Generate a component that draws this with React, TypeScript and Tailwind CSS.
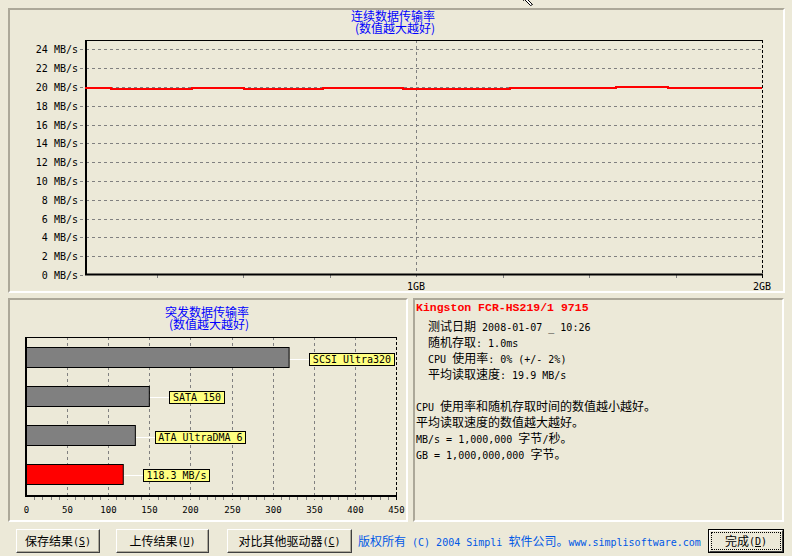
import React from "react";

const MONO = "'DejaVu Sans Mono', 'Noto Sans CJK SC', monospace";
const CJK = "'Noto Sans CJK SC', sans-serif";

// ASCII in a 6px mono cell, CJK at 12px, like the old bitmap font
function Mix({ text }: { text: string }) {
    const parts = text.split(/([\x20-\x7e]+)/).filter(Boolean);
    return (
        <>
            {parts.map((p, i) =>
                /^[\x20-\x7e]+$/.test(p) ? (
                    <span key={i} className="font-['DejaVu_Sans_Mono',monospace] text-[10px]">{p}</span>
                ) : (
                    <span key={i} className="font-['Noto_Sans_CJK_SC',sans-serif] text-[12px]">{p}</span>
                )
            )}
        </>
    );
}

function SpeedChart() {
    const gy = (i: number) => Math.round(275 - i * 18.8) + 0.5;
    const ticks = [157, 243, 330, 503, 589, 676];
    const red =
        "85,88 111,88 111,89 192,89 192,88 244,88 244,89 323,89 323,88 403,88 403,89 510,89 510,88 616,88 616,87 668,87 668,88 762,88";
    return (
        <svg width={773} height={281} viewBox="10 10 773 281" className="block">
            <text x={393} y={21} textAnchor="middle" fontFamily={CJK} fontSize={12} fill="#0000FF">
                连续数据传输率
            </text>
            <text x={395} y={33} textAnchor="middle" fontFamily={CJK} fontSize={12} fill="#0000FF">
                (数值越大越好)
            </text>
            {Array.from({ length: 13 }, (_, i) => i).map((i) => (
                <g key={i}>
                    <line x1={80} x2={i > 0 ? 762 : 85} y1={gy(i)} y2={gy(i)} stroke="#808080" strokeDasharray="3 3" />
                    <text x={78} y={gy(i) + 3.5} textAnchor="end" fontFamily={MONO} fontSize={10} fill="#000">
                        {i * 2} MB/s
                    </text>
                </g>
            ))}
            <line x1={416.5} x2={416.5} y1={40} y2={279} stroke="#808080" strokeDasharray="3 3" />
            {ticks.map((x) => (
                <line key={x} x1={x + 0.5} x2={x + 0.5} y1={275} y2={278} stroke="#808080" />
            ))}
            <line x1={85} x2={762} y1={40.5} y2={40.5} stroke="#000" />
            <line x1={762.5} x2={762.5} y1={40} y2={279} stroke="#000" strokeDasharray="3 2" />
            <line x1={86} x2={86} y1={40} y2={275} stroke="#000" strokeWidth={2} />
            <line x1={85} x2={763} y1={274.5} y2={274.5} stroke="#000" strokeWidth={2} />
            <polyline points={red} fill="none" stroke="#FF0000" strokeWidth={2} />
            <text x={416} y={289.5} textAnchor="middle" fontFamily={MONO} fontSize={10} fill="#000">1GB</text>
            <text x={762} y={289.5} textAnchor="middle" fontFamily={MONO} fontSize={10} fill="#000">2GB</text>
        </svg>
    );
}

const bars = [
    { v: 320, y: 347.5, fill: "#808080", label: "SCSI Ultra320", bx: 309.5, by: 353.5, bw: 85 },
    { v: 150, y: 386.5, fill: "#808080", label: "SATA 150", bx: 169.5, by: 391.5, bw: 55 },
    { v: 133, y: 425.5, fill: "#808080", label: "ATA UltraDMA 6", bx: 155.5, by: 431.5, bw: 90 },
    { v: 118.3, y: 464.5, fill: "#FF0000", label: "118.3 MB/s", bx: 143.5, by: 469.5, bw: 66 },
];

function BurstChart() {
    const sx = (v: number) => Math.floor(26.5 + v * 0.8222) + 0.5;
    const grid = [50, 100, 150, 200, 250, 300, 350, 400];
    const minor = Array.from({ length: 46 }, (_, i) => i * 10).filter((v) => v % 50 !== 0);
    return (
        <svg width={396} height={220} viewBox="10 300 396 220" className="block">
            <text x={207} y={317} textAnchor="middle" fontFamily={CJK} fontSize={12} fill="#0000FF">
                突发数据传输率
            </text>
            <text x={209} y={328.5} textAnchor="middle" fontFamily={CJK} fontSize={12} fill="#0000FF">
                (数值越大越好)
            </text>
            {grid.map((v) => (
                <line key={v} x1={sx(v)} x2={sx(v)} y1={337} y2={500} stroke="#808080" strokeDasharray="3 3" />
            ))}
            {minor.map((v) => (
                <line key={v} x1={sx(v)} x2={sx(v)} y1={497} y2={500} stroke="#808080" />
            ))}
            <line x1={26} x2={396} y1={337.5} y2={337.5} stroke="#000" />
            <line x1={396.5} x2={396.5} y1={337} y2={500} stroke="#000" strokeDasharray="3 2" />
            {bars.map((b) => {
                const x2 = 26 + b.v * 0.8222;
                const cy = b.by + 6;
                return (
                    <g key={b.label}>
                        <line x1={x2} x2={b.bx} y1={cy} y2={cy} stroke="#FFFFFF" />
                        <rect x={26.5} y={b.y} width={x2 - 26.5} height={20} fill={b.fill} stroke="#000" />
                        <rect x={b.bx} y={b.by} width={b.bw} height={12} fill="#FFFF80" stroke="#000" />
                        <text x={b.bx + b.bw / 2} y={cy + 3.5} textAnchor="middle" fontFamily={MONO} fontSize={10} fill="#000">
                            {b.label}
                        </text>
                    </g>
                );
            })}
            <line x1={26} x2={26} y1={337} y2={497} stroke="#000" strokeWidth={2} />
            <line x1={25} x2={397} y1={496} y2={496} stroke="#000" strokeWidth={2} />
            {[0, ...grid, 450].map((v) => (
                <text key={v} x={sx(v)} y={512.5} textAnchor="middle" fontFamily={MONO} fontSize={9} fill="#000">
                    {v}
                </text>
            ))}
        </svg>
    );
}

function Btn({ label, k, className }: { label: string; k: string; className: string }) {
    return (
        <button
            className={
                "h-[24px] flex items-center justify-center bg-[#ECE9D8] text-black border border-t-white border-l-white border-r-[#404040] border-b-[#404040] shadow-[inset_-1px_-1px_#ACA899] " +
                className
            }
        >
            <Mix text={label} />
            <span className="font-['DejaVu_Sans_Mono',monospace] text-[10px]">
                (<span className="underline">{k}</span>)
            </span>
        </button>
    );
}

const info = [
    "  测试日期 2008-01-07 _ 10:26",
    "  随机存取: 1.0ms",
    "  CPU 使用率: 0% (+/- 2%)",
    "  平均读取速度: 19.9 MB/s",
    "",
    "CPU 使用率和随机存取时间的数值越小越好。",
    "平均读取速度的数值越大越好。",
    "MB/s = 1,000,000 字节/秒。",
    "GB = 1,000,000,000 字节。",
];

export default function App() {
    return (
        <div className="w-[792px] h-[556px] bg-[#ECE9D8] relative overflow-hidden pt-2 px-2 font-['Noto_Sans_CJK_SC',sans-serif] text-black">
            <section className="w-[777px] h-[285px] border-2 border-t-[#ACA899] border-l-[#ACA899] border-b-white border-r-white">
                <SpeedChart />
            </section>

            <div className="flex gap-[5px] mt-[5px]">
                <section className="w-[400px] h-[224px] border-2 border-t-[#ACA899] border-l-[#ACA899] border-b-white border-r-white">
                    <BurstChart />
                </section>
                <section className="w-[372px] h-[224px] border-2 border-t-[#ACA899] border-l-[#ACA899] border-b-white border-r-white pl-px whitespace-pre">
                    <div className="h-[16px] leading-[16px] font-['Liberation_Mono',monospace] font-bold text-[11.5px] text-[#FF0000]">
                        Kingston FCR-HS219/1 9715
                    </div>
                    {info.map((line, i) => (
                        <div key={i} className="h-[16px] leading-[16px]">
                            <Mix text={line} />
                        </div>
                    ))}
                </section>
            </div>

            <div className="flex items-center h-[24px] mt-[7px]">
                <Btn label="保存结果" k="S" className="ml-[8px] w-[84px]" />
                <Btn label="上传结果" k="U" className="ml-[16px] w-[93px]" />
                <Btn label="对比其他驱动器" k="C" className="ml-[18px] w-[125px]" />
                <span className="ml-[6px] w-[342px] whitespace-pre text-[#0058E6] leading-[16px]">
                    <Mix text="版权所有 (C) 2004 Simpli 软件公司。www.simplisoftware.com" />
                </span>
                <div className="ml-[8px] w-[76px] h-[24px] border border-black flex">
                    <div className="flex-1 flex border border-t-white border-l-white border-r-[#404040] border-b-[#404040] bg-[#ECE9D8]">
                        <div className="flex-1 m-px border border-dotted border-black flex items-center justify-center">
                            <Mix text="完成" />
                            <span className="font-['DejaVu_Sans_Mono',monospace] text-[10px]">
                                (<span className="underline">D</span>)
                            </span>
                        </div>
                    </div>
                </div>
            </div>

            {/* mouse pointer tail peeking in at the top */}
            <svg className="absolute left-[519px] top-0" width={16} height={9} viewBox="0 0 16 9">
                <path d="M2.5 -2 L4.5 0.5 L5.5 -0.5 L11.5 5.5 L13.5 4.5 L8.5 -0.5" fill="#fff" stroke="#000" />
            </svg>
        </div>
    );
}
